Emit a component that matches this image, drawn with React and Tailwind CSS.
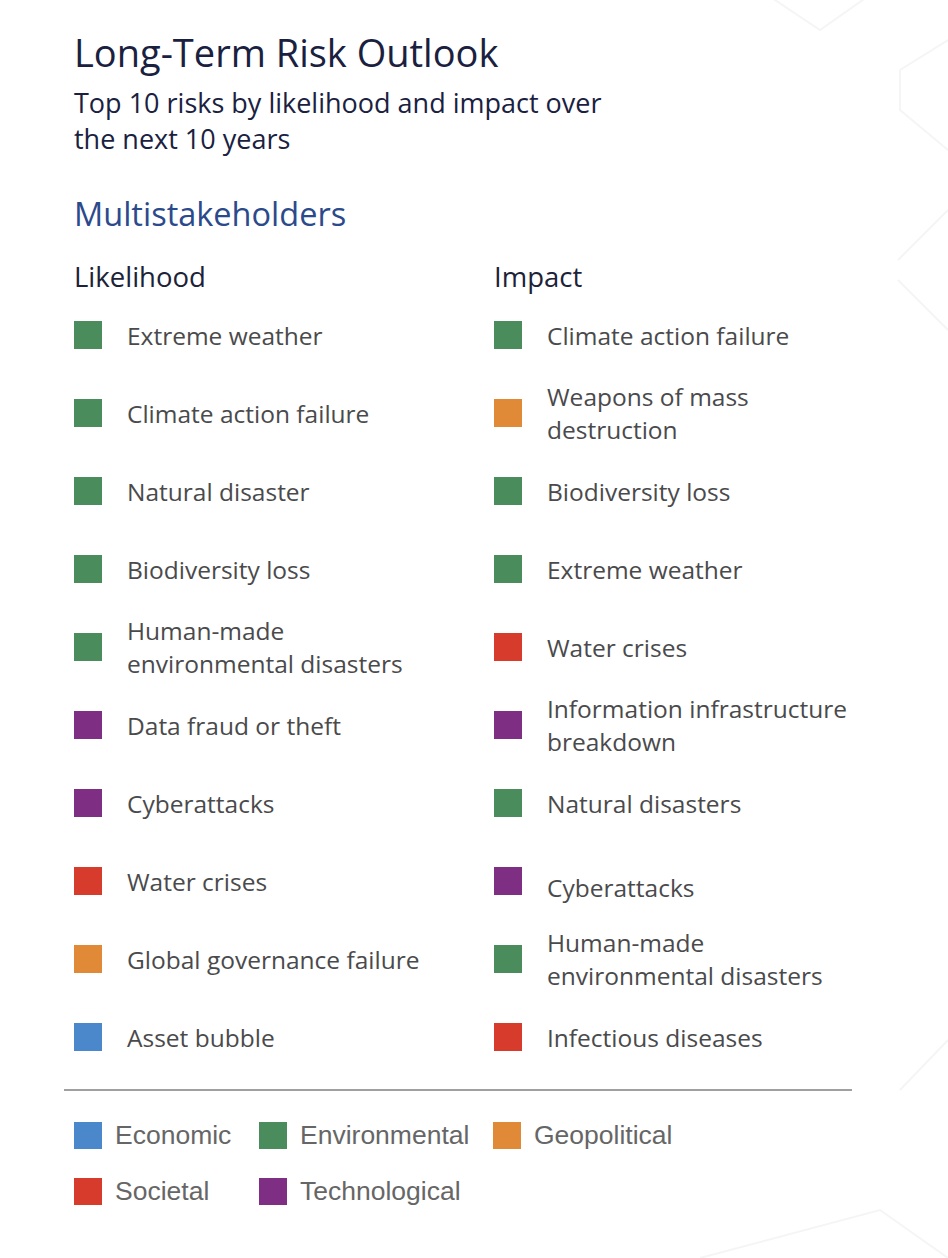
const GREEN = 'bg-[#4b8c5c]'
const ORANGE = 'bg-[#e08a37]'
const RED = 'bg-[#d63b2b]'
const PURPLE = 'bg-[#7e2f83]'
const BLUE = 'bg-[#4a87cb]'

const likelihood = [
  { color: GREEN, label: 'Extreme weather' },
  { color: GREEN, label: 'Climate action failure' },
  { color: GREEN, label: 'Natural disaster' },
  { color: GREEN, label: 'Biodiversity loss' },
  { color: GREEN, label: ['Human-made', 'environmental disasters'] },
  { color: PURPLE, label: 'Data fraud or theft' },
  { color: PURPLE, label: 'Cyberattacks' },
  { color: RED, label: 'Water crises' },
  { color: ORANGE, label: 'Global governance failure' },
  { color: BLUE, label: 'Asset bubble' },
]

const impact = [
  { color: GREEN, label: 'Climate action failure' },
  { color: ORANGE, label: ['Weapons of mass', 'destruction'] },
  { color: GREEN, label: 'Biodiversity loss' },
  { color: GREEN, label: 'Extreme weather' },
  { color: RED, label: 'Water crises' },
  { color: PURPLE, label: ['Information infrastructure', 'breakdown'] },
  { color: GREEN, label: 'Natural disasters' },
  { color: PURPLE, label: 'Cyberattacks', low: true },
  { color: GREEN, label: ['Human-made', 'environmental disasters'] },
  { color: RED, label: 'Infectious diseases' },
]

function RiskColumn({ title, items }) {
  return (
    <div>
      <h3 className="text-[27.5px] leading-[34px] text-[#1c2238]">{title}</h3>
      <ul className="mt-[2px]">
        {items.map((item, i) => (
          <li key={i} className="h-[78px] flex items-center">
            <span className={`w-[28px] h-[28px] shrink-0 ${item.color}`} />
            <span className={`ml-[25px] text-[24.5px] leading-[33px] text-[#4a4a4c] ${item.low ? 'mt-[12px]' : ''}`}>
              {Array.isArray(item.label)
                ? item.label.map((l, j) => <span key={j} className="block">{l}</span>)
                : item.label}
            </span>
          </li>
        ))}
      </ul>
    </div>
  )
}

function LegendItem({ color, label, width }) {
  return (
    <div className={`flex items-center ${width}`}>
      <span className={`w-[28px] h-[27px] shrink-0 ${color}`} />
      <span className="ml-[13px] text-[26.5px] leading-[30px] text-[#666]" style={{ fontFamily: '"Liberation Sans", Arial, sans-serif' }}>{label}</span>
    </div>
  )
}

export default function App() {
  return (
    <div className="relative w-[948px] h-[1258px] bg-white overflow-hidden" style={{ fontFamily: '"Open Sans", "Noto Sans", sans-serif' }}>
      <svg className="absolute inset-0 pointer-events-none" width="948" height="1258" viewBox="0 0 948 1258" fill="none">
        <g stroke="#f5f5f5" strokeWidth="2">
          <path d="M760 -10 L820 30 L948 -60" />
          <path d="M900 70 L948 40" />
          <path d="M900 70 L900 110 L948 150" />
          <path d="M898 260 L948 210" />
          <path d="M898 280 L948 330" />
          <path d="M900 1090 L948 1040" />
          <path d="M700 1258 L880 1210 L948 1258" />
        </g>
      </svg>
      <div className="relative pl-[74px] pt-[27px]">
        <h1 className="text-[38px] leading-[50px] text-[#1a2140]">Long-Term Risk Outlook</h1>
        <p className="mt-[8px] text-[27px] leading-[36px] text-[#1a2140]">
          Top 10 risks by likelihood and impact over<br />the next 10 years
        </p>
        <h2 className="mt-[36px] text-[32.5px] leading-[42px] text-[#2b4a8c]">Multistakeholders</h2>
        <div className="mt-[25px] grid grid-cols-[420px_1fr]">
          <RiskColumn title="Likelihood" items={likelihood} />
          <RiskColumn title="Impact" items={impact} />
        </div>
      </div>
      <div className="relative ml-[64px] mt-[13px] w-[788px] border-t-2 border-[#a0a0a0]" />
      <div className="relative pl-[74px] pt-[29px] flex flex-col gap-[26px]">
        <div className="flex">
          <LegendItem color={BLUE} label="Economic" width="w-[185px]" />
          <LegendItem color={GREEN} label="Environmental" width="w-[234px]" />
          <LegendItem color={ORANGE} label="Geopolitical" width="" />
        </div>
        <div className="flex">
          <LegendItem color={RED} label="Societal" width="w-[185px]" />
          <LegendItem color={PURPLE} label="Technological" width="" />
        </div>
      </div>
    </div>
  )
}
